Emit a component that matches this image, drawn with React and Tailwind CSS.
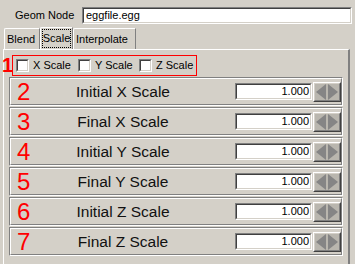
import React from "react";

const font = { fontFamily: '"Liberation Sans", Arial, sans-serif' };

function Sunken({ className = "", children }) {
  return (
    <div className={"border border-t-[#808080] border-l-[#808080] border-b-white border-r-white " + className}>
      <div className="w-full h-full border border-t-[#404040] border-l-[#404040] border-b-[#d4d0c8] border-r-[#d4d0c8] bg-white">
        {children}
      </div>
    </div>
  );
}

function Check({ label, w }) {
  return (
    <div className={"flex items-center shrink-0 whitespace-nowrap " + w}>
      <Sunken className="w-[13px] h-[13px] shrink-0" />
      <span className="ml-[4px] text-[11px] text-black leading-none">{label}</span>
    </div>
  );
}

function Arrows() {
  return (
    <div className="w-[28px] h-[20px] border border-t-white border-l-white border-b-[#404040] border-r-[#404040]">
      <div className="w-full h-full border border-t-[#d4d0c8] border-l-[#d4d0c8] border-b-[#808080] border-r-[#808080] bg-[#b9b6ae] flex items-center justify-center">
        <svg width="22" height="16" viewBox="0 0 22 16">
          <polygon points="0,8 10,0 10,16" fill="#858585" />
          <polygon points="22,8 12,0 12,16" fill="#858585" />
        </svg>
      </div>
    </div>
  );
}

function Row({ n, label }) {
  return (
    <div className="relative h-[29px] border border-t-[#808080] border-l-[#808080] border-b-white border-r-white">
      <div className="w-full h-full border border-t-white border-l-white border-b-[#808080] border-r-[#808080] flex items-center">
        <div className="flex-1 text-center text-[15.5px] text-[#111] leading-none">{label}</div>
        <Sunken className="w-[77px] h-[17px]">
          <div className="h-full flex items-center justify-end pr-[1px] text-[11px] text-black leading-none">1.000</div>
        </Sunken>
        <div className="ml-[1px]">
          <Arrows />
        </div>
      </div>
      <span className="absolute left-[7px] top-[0px] text-[24px] leading-[27px] text-[#ff0000]">{n}</span>
    </div>
  );
}

export default function App() {
  const rows = [
    ["2", "Initial X Scale"],
    ["3", "Final X Scale"],
    ["4", "Initial Y Scale"],
    ["5", "Final Y Scale"],
    ["6", "Initial Z Scale"],
    ["7", "Final Z Scale"],
  ];
  return (
    <div className="w-[355px] h-[264px] bg-[#d4d0c8] overflow-hidden relative" style={font}>
      {/* Geom node */}
      <div className="flex items-center pt-[7px] h-[24px]">
        <span className="ml-[15px] w-[67px] text-[11px] text-black leading-none">Geom Node</span>
        <Sunken className="w-[270px] h-[17px]">
          <div className="h-full flex items-center pl-[2px] text-[11px] text-black leading-none">eggfile.egg</div>
        </Sunken>
      </div>
      {/* tabs */}
      <div className="flex items-end h-[22px] mt-[3px] pl-[4px]">
        <div className="h-[21px] w-[36px] border-t border-l border-white border-r border-r-[#808080] rounded-tl-[2px] flex items-center pl-[2px] text-[11px] text-black leading-none">
          Blend
        </div>
        <div className="h-[22px] w-[33px] border-t border-l border-white border-r border-r-[#808080] rounded-tl-[2px] flex items-center justify-center text-[11px] text-black leading-none">
          <span className="border border-dotted border-black px-[0px] py-[3px]">Scale</span>
        </div>
        <div className="h-[21px] w-[63px] border-t border-l border-white border-r border-r-[#808080] rounded-tl-[2px] flex items-center pl-[2px] text-[11px] text-black leading-none">
          Interpolate
        </div>
      </div>
      {/* panel */}
      <div className="ml-[3px] w-[347px] h-[230px] border-t border-l border-white border-r-2 border-r-[#808080]">
        <div className="pt-[5px]">
          <div className="ml-[8px] w-[185px] h-[21px] border border-[#ff0000] flex items-center pl-[3px]">
            <Check label="X Scale" w="w-[62px]" />
            <Check label="Y Scale" w="w-[61px]" />
            <Check label="Z Scale" w="w-[54px]" />
          </div>
          <div className="mt-[1px] ml-[5px] w-[334px] flex flex-col gap-[1px]">
            {rows.map(([n, l]) => (
              <Row key={n} n={n} label={l} />
            ))}
          </div>
        </div>
      </div>
      <span className="absolute left-[2px] top-[54px] text-[20px] font-bold leading-[22px] text-[#ff0000]">1</span>
    </div>
  );
}
